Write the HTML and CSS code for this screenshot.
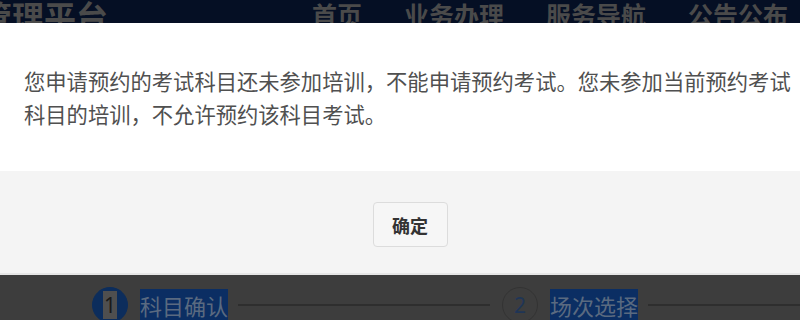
FILE: index.html
```html
<!DOCTYPE html>
<html lang="zh-CN">
<head>
    <meta charset="UTF-8">
    <meta name="viewport" content="width=device-width, initial-scale=1.0">
    <title>预约考试</title>
    <link rel="stylesheet" href="styles.css">
</head>
<body>
    <div class="page">
        <div class="header">
            <div class="logo">管理平台</div>
            <ul class="nav">
                <li>首页</li>
                <li>业务办理</li>
                <li>服务导航</li>
                <li>公告公布</li>
            </ul>
        </div>

        <div class="steps">
            <div class="step-num active"><span class="sel-num">1</span></div>
            <div class="step-name"><span class="sel">科目确认</span></div>
            <div class="step-line first"></div>
            <div class="step-num">2</div>
            <div class="step-name"><span class="sel">场次选择</span></div>
            <div class="step-line"></div>
        </div>
    </div>

    <!-- 提示弹窗 -->
    <div class="modal">
        <div class="modal-body">
            您申请预约的考试科目还未参加培训，不能申请预约考试。您未参加当前预约考试科目的培训，不允许预约该科目考试。
        </div>
        <div class="modal-footer">
            <button class="btn-ok">确定</button>
        </div>
    </div>
</body>
</html>
```

FILE: styles.css
```css
html, body {
    margin: 0;
    padding: 0;
    height: 100%;
    overflow: hidden;
}
body {
    position: relative;
    font-family: "Noto Sans CJK SC", "Noto Sans", sans-serif;
    background-color: #3d3d3d;
}
.header {
    display: flex;
    height: 60px;
    background-color: #050f24;
    color: #4a4a4a;
    font-weight: bold;
}
.logo {
    margin-left: -20px;
    font-size: 32px;
    line-height: 1;
    margin-top: -1px;
}
.nav {
    display: flex;
    gap: 42px;
    list-style: none;
    margin: 0 12px 0 auto;
    padding: 0;
    font-size: 25px;
    line-height: 1;
    margin-top: 2px;
}
.steps {
    display: flex;
    align-items: center;
    padding: 227px 0 0 92px;
}
.step-num {
    box-sizing: border-box;
    flex: none;
    width: 36px;
    height: 36px;
    border-radius: 50%;
    border: 1px solid #333;
    color: #1f3556;
    font-family: "Noto Sans", sans-serif;
    font-size: 21px;
    line-height: 34px;
    text-align: center;
}
.step-num.active {
    background-color: #0c2d5c;
    border-color: #0c2d5c;
}
.sel-num {
    background-color: #4f4f4f;
    color: #1a1a1a;
    padding: 0 1px;
}
.step-name {
    flex: none;
    margin-left: 12px;
    font-size: 22px;
    line-height: 28px;
}
.sel {
    background-color: #0b2e63;
    color: #5a6a80;
}
.step-line {
    flex: 1;
    height: 2px;
    margin: 0 0 0 10px;
    background-color: #2e2e2e;
}
.step-line.first {
    flex: none;
    width: 252px;
    margin-right: 12px;
}
.modal {
    position: absolute;
    top: 23px;
    left: 0;
    width: 820px;
    background-color: #fff;
}
.modal-body {
    padding: 41px 24px 41px 24px;
    font-size: 21.3px;
    line-height: 33px;
    color: #505050;
}
.modal-footer {
    padding: 31px 0 26px;
    text-align: center;
    background-color: #f4f4f4;
    border-bottom: 2px solid #e6e6e6;
}
.btn-ok {
    width: 75px;
    height: 45px;
    border: 1px solid #dcdcdc;
    border-radius: 4px;
    background-color: #f6f6f6;
    color: #333;
    font-family: "Noto Sans CJK SC", sans-serif;
    font-size: 18px;
    font-weight: bold;
    cursor: pointer;
}
```
